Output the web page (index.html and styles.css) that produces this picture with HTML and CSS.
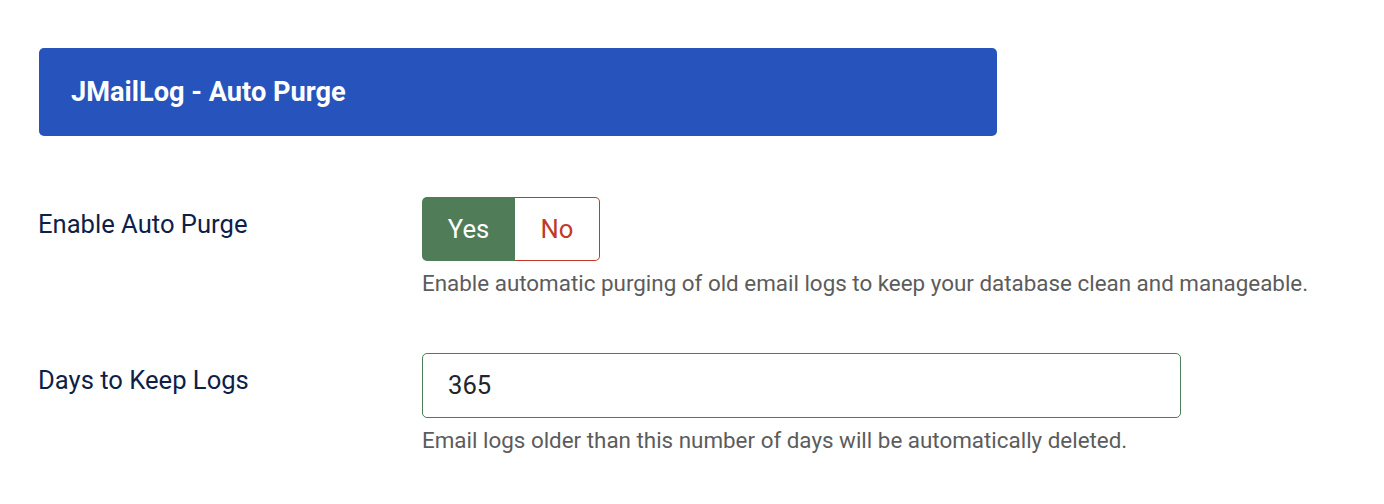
FILE: index.html
```html
<!DOCTYPE html>
<html lang="en">
<head>
    <meta charset="UTF-8">
    <title>JMailLog - Auto Purge</title>
    <link rel="stylesheet" href="styles.css">
</head>
<body>

    <div class="page">
        <!-- Sarlavha -->
        <div class="card-header">
            <h3>JMailLog - Auto Purge</h3>
        </div>

        <div class="control-group">
            <div class="control-label">
                <label>Enable Auto Purge</label>
            </div>
            <div class="controls">
                <div class="switcher">
                    <span class="switch-yes">Yes</span>
                    <span class="switch-no">No</span>
                </div>
                <div class="form-text">Enable automatic purging of old email logs to keep your database clean and manageable.</div>
            </div>
        </div>

        <div class="control-group">
            <div class="control-label">
                <label for="days">Days to Keep Logs</label>
            </div>
            <div class="controls">
                <input type="text" id="days" class="form-control" value="365">
                <div class="form-text">Email logs older than this number of days will be automatically deleted.</div>
            </div>
        </div>
    </div>

</body>
</html>
```

FILE: styles.css
```css
/* Umumiy sozlamalar */
body {
    font-family: Roboto, "Liberation Sans", sans-serif;
    background-color: #fff;
    margin: 0;
    padding: 48px 0 0 39px;
}

.page {
    width: 1340px;
}

/* Sarlavha bloki */
.card-header {
    background-color: #2754bc;
    width: 958px;
    height: 88px;
    border-radius: 5px;
    box-sizing: border-box;
    padding: 0 32px;
    display: flex;
    align-items: center;
}

.card-header h3 {
    margin: 0;
    color: #fff;
    font-size: 27.2px;
    font-weight: 700;
}

/* Forma qatorlari */
.control-group {
    display: flex;
    margin-top: 61px;
}

.control-group + .control-group {
    margin-top: 52px;
}

.control-label {
    width: 383px;
    flex-shrink: 0;
    padding-top: 8px;
}

.control-label label {
    font-size: 25.6px;
    line-height: 1.5;
    color: #0e1f4a;
    margin-left: -1px;
}

.controls {
    display: flex;
    flex-direction: column;
    align-items: flex-start;
}

/* Ha / Yo'q tugmasi */
.switcher {
    display: flex;
    height: 64px;
}

.switcher span {
    display: flex;
    align-items: center;
    justify-content: center;
    font-size: 25.6px;
    box-sizing: border-box;
}

.switch-yes {
    width: 93px;
    background-color: #507d58;
    color: #fff;
    border-radius: 5px 0 0 5px;
}

.switch-no {
    width: 85px;
    color: #c0392b;
    border: 1px solid #c0392b;
    border-left: none;
    border-radius: 0 5px 5px 0;
}

.form-text {
    font-size: 22.4px;
    line-height: 1.5;
    color: #5c5c5c;
    margin-top: 6px;
}

/* Matn maydoni */
.form-control {
    width: 759px;
    height: 65px;
    box-sizing: border-box;
    border: 1px solid #4e7d5a;
    border-radius: 5px;
    padding: 0 25px;
    font-family: Roboto, "Liberation Sans", sans-serif;
    font-size: 25.6px;
    color: #22262a;
    outline: none;
}
```
